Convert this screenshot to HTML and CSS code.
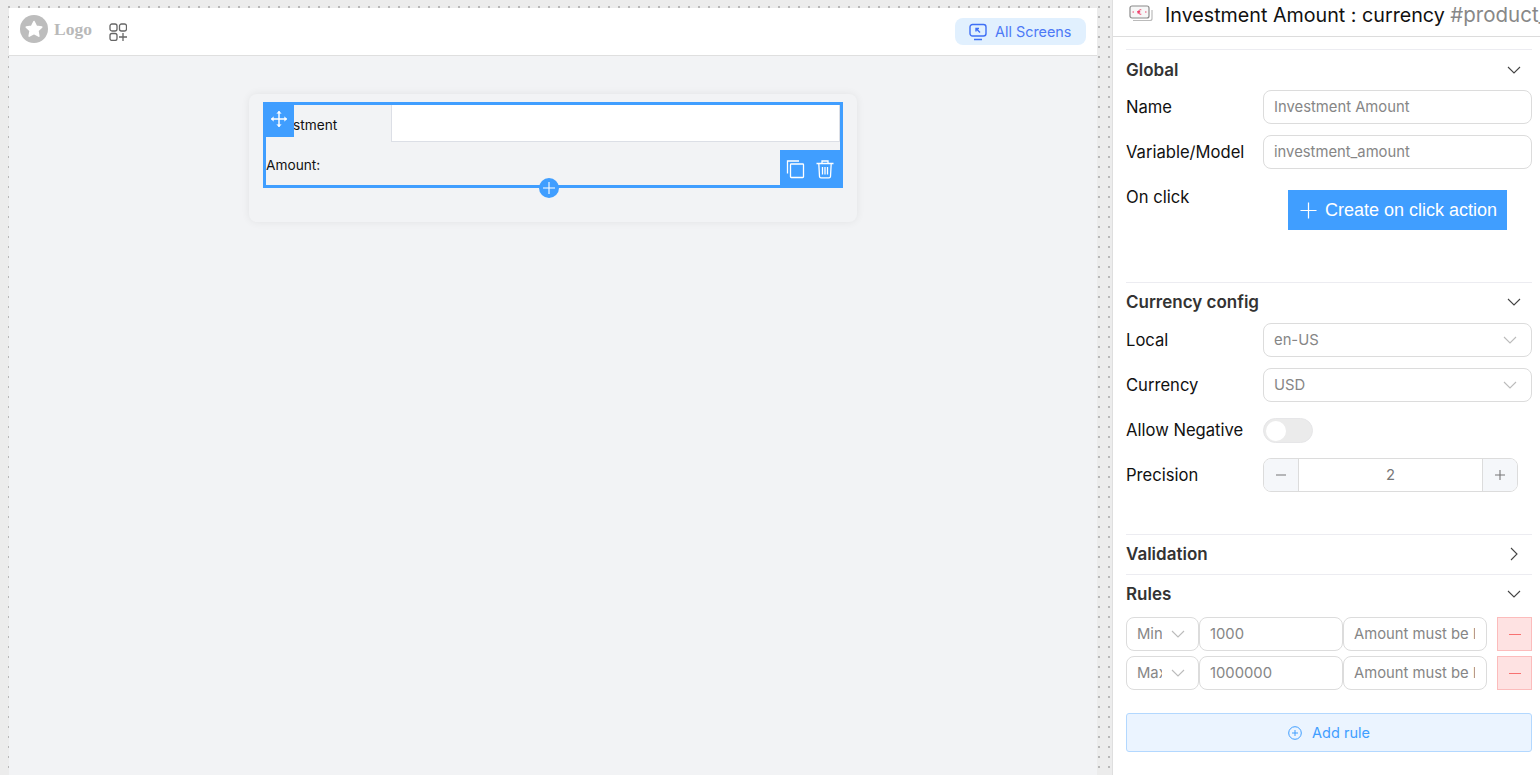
FILE: index.html
```html
<!DOCTYPE html>
<html lang="en">
<head>
<meta charset="utf-8">
<title>Investment Amount</title>
<link rel="stylesheet" href="styles.css">
</head>
<body>
<main class="stage">
  <div class="canvas">
    <header class="topbar">
      <div class="brand">
        <svg class="logo-mark" viewBox="0 0 28 28"><circle cx="14" cy="14" r="14" fill="#bdbdbd"/><path d="M14 6.5l2.4 4.8 5.3.8-3.8 3.7.9 5.3-4.8-2.5-4.8 2.5.9-5.3-3.8-3.7 5.3-.8z" fill="#fff" stroke="#fff" stroke-width="1.6" stroke-linejoin="round"/></svg>
        <span class="logo-text">Logo</span>
        <svg class="apps" viewBox="0 0 18 18" fill="none" stroke="#666" stroke-width="1.3"><rect x="1" y="1" width="7" height="7" rx="2"/><rect x="10.5" y="1" width="7" height="7" rx="2"/><rect x="1" y="10.5" width="7" height="7" rx="2"/><path d="M14 10v8M10 14h8"/></svg>
      </div>
      <button class="screens">
        <svg viewBox="0 0 18 18" fill="none" stroke="#3f6ff5" stroke-width="1.4"><rect x="1" y="1.5" width="16" height="11.5" rx="2.5"/><path d="M5 16.5h8M11 9.5L7 5.5M7 8.5v-3h3"/></svg>
        All Screens
      </button>
    </header>
    <div class="workspace">
      <section class="card">
        <div class="selected">
          <div class="field">
            <label class="field-label">Investment Amount:</label>
            <div class="field-input"></div>
          </div>
          <div class="handle">
            <svg viewBox="0 0 20 20" fill="none" stroke="#fff" stroke-width="1.6"><path d="M10 1.5v17M1.5 10h17"/><path d="M7.8 4L10 1.5 12.2 4M7.8 16L10 18.500 12.200 16M4 7.800L1.500 10 4 12.200M16 7.800L18.500 10 16 12.200" fill="#fff" stroke-width="1"/></svg>
          </div>
          <div class="actions">
            <svg viewBox="0 0 20 20" fill="none" stroke="#fff" stroke-width="1.3"><path d="M14 2H2.500v12.500"/><rect x="5.500" y="5" width="13" height="13.500" rx=".8"/></svg>
            <svg viewBox="0 0 20 20" fill="none" stroke="#fff" stroke-width="1.3"><path d="M1.500 4.500h17M7 4.500V2h6v2.500M3.800 4.500l.7 13a1.500 1.500 0 0 0 1.500 1.300h8a1.500 1.500 0 0 0 1.500-1.300l.7-13M7.500 8v7.500M10 8v7.500M12.500 8v7.500"/></svg>
          </div>
          <div class="add-below">
            <svg viewBox="0 0 12 12" fill="none" stroke="#fff" stroke-width="1.1"><path d="M6 0v12M0 6h12"/></svg>
          </div>
        </div>
      </section>
    </div>
  </div>
</main>

<aside class="panel">
  <div class="panel-head">
    <svg class="cash" viewBox="0 0 24 18" fill="none"><rect x="1" y="1" width="19" height="12" rx="2" fill="#f7f7f7" stroke="#8a8a8a" stroke-width="1.200"/><path d="M4 15.500h17a2 2 0 0 0 2-2V5" stroke="#bbb" stroke-width="1.200"/><path d="M3.500 7h1.500M16 7h1.500M12.300 4.800a2.300 2.300 0 1 0 0 4.400M8.200 6.500h3M8.200 7.800h3" stroke="#f0406c" stroke-width="1"/></svg>
    <h1 class="panel-title">Investment Amount : currency <span class="panel-id">#product_investment_amount</span></h1>
  </div>
  <div class="panel-body">
    <section class="group">
      <div class="group-head"><h2>Global</h2><svg class="chev" viewBox="0 0 14 8"><path d="M1 1l6 6 6-6"/></svg></div>
      <div class="row"><label>Name</label><input class="control" value="Investment Amount" readonly></div>
      <div class="row"><label>Variable/Model</label><input class="control" value="investment_amount" readonly></div>
      <div class="row row-click">
        <label>On click</label>
        <button class="create"><svg viewBox="0 0 18 18" fill="none" stroke="#fff" stroke-width="1.300"><path d="M9 .5v17M.5 9h17"/></svg>Create on click action</button>
      </div>
    </section>
    <section class="group group-currency">
      <div class="group-head"><h2>Currency config</h2><svg class="chev" viewBox="0 0 14 8"><path d="M1 1l6 6 6-6"/></svg></div>
      <div class="row"><label>Local</label><div class="control select"><span>en-US</span><svg class="chev light" viewBox="0 0 14 8"><path d="M1 1l6 6 6-6"/></svg></div></div>
      <div class="row"><label>Currency</label><div class="control select"><span>USD</span><svg class="chev light" viewBox="0 0 14 8"><path d="M1 1l6 6 6-6"/></svg></div></div>
      <div class="row"><label>Allow Negative</label><div class="toggle"><span class="knob"></span></div></div>
      <div class="row">
        <label>Precision</label>
        <div class="stepper">
          <span class="step"><svg viewBox="0 0 10 10" stroke="#777" stroke-width="1.100"><path d="M0 5h10"/></svg></span>
          <span class="step-value">2</span>
          <span class="step"><svg viewBox="0 0 10 10" stroke="#777" stroke-width="1.100"><path d="M0 5h10M5 0v10"/></svg></span>
        </div>
      </div>
    </section>
    <section class="group group-validation">
      <div class="group-head"><h2>Validation</h2><svg class="chev-right" viewBox="0 0 8 14"><path d="M1 1l6 6-6 6"/></svg></div>
    </section>
    <section class="group group-rules">
      <div class="group-head"><h2>Rules</h2><svg class="chev" viewBox="0 0 14 8"><path d="M1 1l6 6 6-6"/></svg></div>
      <div class="rule">
        <div class="rule-type"><span>Min</span><svg class="chev light" viewBox="0 0 14 8"><path d="M1 1l6 6 6-6"/></svg></div>
        <input class="rule-input" value="1000" readonly>
        <input class="rule-input" value="Amount must be larger than 1000" readonly>
        <button class="remove"><span></span></button>
      </div>
      <div class="rule">
        <div class="rule-type"><span>Max</span><svg class="chev light" viewBox="0 0 14 8"><path d="M1 1l6 6 6-6"/></svg></div>
        <input class="rule-input" value="1000000" readonly>
        <input class="rule-input" value="Amount must be less than 1000000" readonly>
        <button class="remove"><span></span></button>
      </div>
      <button class="add-rule"><svg viewBox="0 0 14 14" fill="none" stroke="#409eff" stroke-width="1"><circle cx="7" cy="7" r="6.300"/><path d="M7 4v6M4 7h6"/></svg>Add rule</button>
    </section>
  </div>
</aside>
</body>
</html>
```
FILE: styles.css
```css
* { box-sizing: border-box; }
html, body { height: 100%; }
body {
  margin: 0;
  height: 775px;
  overflow: hidden;
  display: flex;
  font-family: Inter, "Noto Sans", sans-serif;
  color: #111;
  background: #fff;
}
button { font-family: inherit; cursor: pointer; }

.stage {
  flex: 0 0 1112px;
  height: 775px;
  padding: 8px 15px 0 9px;
  background-color: #ececec;
  background-image: radial-gradient(circle, #b8b8b8 0.9px, transparent 1.1px);
  background-size: 10px 10px;
  background-position: 4px 2px;
}
.canvas {
  height: 767px;
  display: flex;
  flex-direction: column;
  background: #f2f3f5;
}
.topbar {
  flex: 0 0 48px;
  display: flex;
  align-items: center;
  justify-content: space-between;
  padding: 0 11px 0 11px;
  background: #fff;
  border-bottom: 1px solid #dfdfdf;
}
.brand { display: flex; align-items: center; margin-top: -5px; }
.logo-mark { width: 28px; height: 28px; }
.logo-text {
  margin-left: 6px;
  font: bold 17.500px "Liberation Serif", serif;
  color: #b9b9b9;
}
.apps { width: 18px; height: 18px; margin-left: 17px; margin-top: 5px; }
.screens {
  display: flex;
  align-items: center;
  gap: 8px;
  width: 131px;
  height: 27px;
  padding: 0 0 0 14px;
  border: 0;
  border-radius: 8px;
  background: #e1f0fe;
  color: #4d79f6;
  font-size: 14.400px;
}
.screens svg { width: 18px; height: 18px; }

.workspace { flex: 1; padding-top: 38px; }
.card {
  width: 608px;
  height: 128px;
  margin-left: 240px;
  padding: 8px 14px;
  border-radius: 8px;
  background: #f2f3f5;
  box-shadow: 0 0 8px rgba(0, 0, 0, 0.07);
}
.selected {
  position: relative;
  width: 580px;
  height: 86px;
  border: 3px solid #409eff;
}
.field { display: flex; align-items: flex-start; }
.field-label {
  flex: 0 0 125px;
  padding-right: 10px;
  font-size: 13.700px;
  line-height: 40px;
  color: #111;
}
.field-input {
  flex: 0 0 449px;
  height: 37px;
  background: #fff;
  border: 1px solid #dcdfe6;
  border-top: 0;
}
.handle {
  position: absolute;
  left: -1px;
  top: 0;
  width: 29px;
  height: 32px;
  background: #409eff;
  display: flex;
  align-items: center;
  justify-content: center;
  padding: 0 2px 4px 0;
}
.handle svg { width: 18px; height: 18px; }
.actions {
  position: absolute;
  right: -3px;
  bottom: -3px;
  width: 63px;
  height: 38px;
  display: flex;
  align-items: center;
  gap: 10px;
  padding: 0 0 0 5px;
  background: #409eff;
}
.actions svg { width: 20px; height: 20px; }
.add-below {
  position: absolute;
  left: 273px;
  bottom: -13px;
  width: 20px;
  height: 20px;
  border-radius: 50%;
  background: #409eff;
  display: flex;
  align-items: center;
  justify-content: center;
}
.add-below svg { width: 12px; height: 12px; }

.panel {
  flex: 0 0 428px;
  height: 775px;
  overflow: hidden;
  background: #fff;
  border-left: 1px solid #dfdfdf;
}
.panel-head {
  display: flex;
  align-items: center;
  height: 37px;
  padding-left: 16px;
  padding-bottom: 8px;
  border-bottom: 1px solid #dcdcdc;
  white-space: nowrap;
  overflow: hidden;
}
.cash { flex: 0 0 24px; height: 18px; }
.panel-title {
  margin: 0 0 0 12px;
  font-size: 19.700px;
  font-weight: 400;
  color: #111;
}
.panel-id { color: #888; font-size: 20.500px; }
.panel-body { padding: 12px 8px 0 13px; }
.group { border-top: 1px solid #ececf1; }
.group-head {
  display: flex;
  align-items: center;
  justify-content: space-between;
  height: 40px;
  padding-right: 11px;
}
.group-currency .group-head,
.group-validation .group-head { padding-bottom: 2px; }
.group-head h2 {
  margin: 0;
  font-size: 17px;
  font-weight: 600;
  color: #333;
}
.chev { width: 14px; height: 8px; fill: none; stroke: #444; stroke-width: 1.100; }
.chev.light { stroke: #bbb; }
.chev-right { width: 8px; height: 14px; fill: none; stroke: #444; stroke-width: 1.100; margin-right: 3px; }

.row {
  display: flex;
  align-items: center;
  height: 34px;
  margin-bottom: 11px;
}
.row label {
  flex: 0 0 137px;
  font-size: 16.600px;
  color: #111;
}
.control {
  flex: 0 0 269px;
  height: 34px;
  padding: 0 10px;
  border: 1px solid #dcdcdc;
  border-radius: 8px;
  background: #fff;
  font: 14.800px Inter, sans-serif;
  color: #868686;
  outline: 0;
}
.select {
  display: flex;
  align-items: center;
  justify-content: space-between;
  padding-right: 14px;
}
.row-click {
  height: 102px;
  margin-bottom: 0;
  align-items: flex-start;
  padding-top: 7px;
}
.create {
  display: flex;
  align-items: center;
  gap: 8px;
  width: 219px;
  height: 40px;
  margin: 3px 0 0 25px;
  padding: 0 0 0 12px;
  border: 0;
  background: #409eff;
  color: #fff;
  font: 18px "Liberation Sans", sans-serif;
  white-space: nowrap;
}
.create svg { width: 17px; height: 17px; flex: none; }

.group-currency { height: 252px; }
.toggle {
  width: 50px;
  height: 25px;
  padding: 2px;
  border-radius: 13px;
  background: #ebebeb;
  border: 1px solid #e6e6e8;
}
.knob {
  display: block;
  width: 20px;
  height: 20px;
  border-radius: 50%;
  background: #fff;
}
.stepper {
  display: flex;
  width: 255px;
  height: 34px;
  border: 1px solid #dcdcdc;
  border-radius: 8px;
  overflow: hidden;
}
.step {
  flex: 0 0 34px;
  display: flex;
  align-items: center;
  justify-content: center;
  background: #f5f7fa;
}
.step svg { width: 10px; height: 10px; }
.step-value {
  flex: 1;
  text-align: center;
  font-size: 14.800px;
  line-height: 32px;
  color: #777;
  border-left: 1px solid #dcdcdc;
  border-right: 1px solid #dcdcdc;
}

.group-validation { height: 40px; }
.group-rules { padding-bottom: 20px; }
.group-rules .group-head { height: 38px; margin-bottom: 4px; }
.rule {
  display: flex;
  height: 34px;
  margin-bottom: 5px;
}
.rule-type {
  flex: 0 0 73px;
  display: flex;
  align-items: center;
  gap: 9px;
  padding: 0 0 0 10px;
  border: 1px solid #dcdcdc;
  border-radius: 8px;
  font-size: 14.800px;
  color: #868686;
}
.rule-type span { width: 25px; overflow: hidden; }
.rule-input {
  flex: 0 0 144px;
  min-width: 0;
  height: 34px;
  padding: 0 11px 0 10px;
  border: 1px solid #dcdcdc;
  border-radius: 8px;
  background: #fff;
  font: 14.800px Inter, sans-serif;
  color: #868686;
  outline: 0;
}
.remove {
  flex: 0 0 35px;
  display: flex;
  align-items: center;
  justify-content: center;
  margin-left: 10px;
  padding: 0;
  border: 1px solid #fcbcbc;
  background: #fee2e2;
}
.remove span { display: block; width: 12px; height: 1px; background: #f87171; }
.add-rule {
  display: flex;
  align-items: center;
  justify-content: center;
  gap: 10px;
  width: 406px;
  height: 39px;
  margin-top: 23px;
  border: 1px solid #b3d8ff;
  border-radius: 3px;
  background: #ebf4ff;
  color: #409eff;
  font-size: 14.500px;
}
.add-rule svg { width: 14px; height: 14px; }
```
